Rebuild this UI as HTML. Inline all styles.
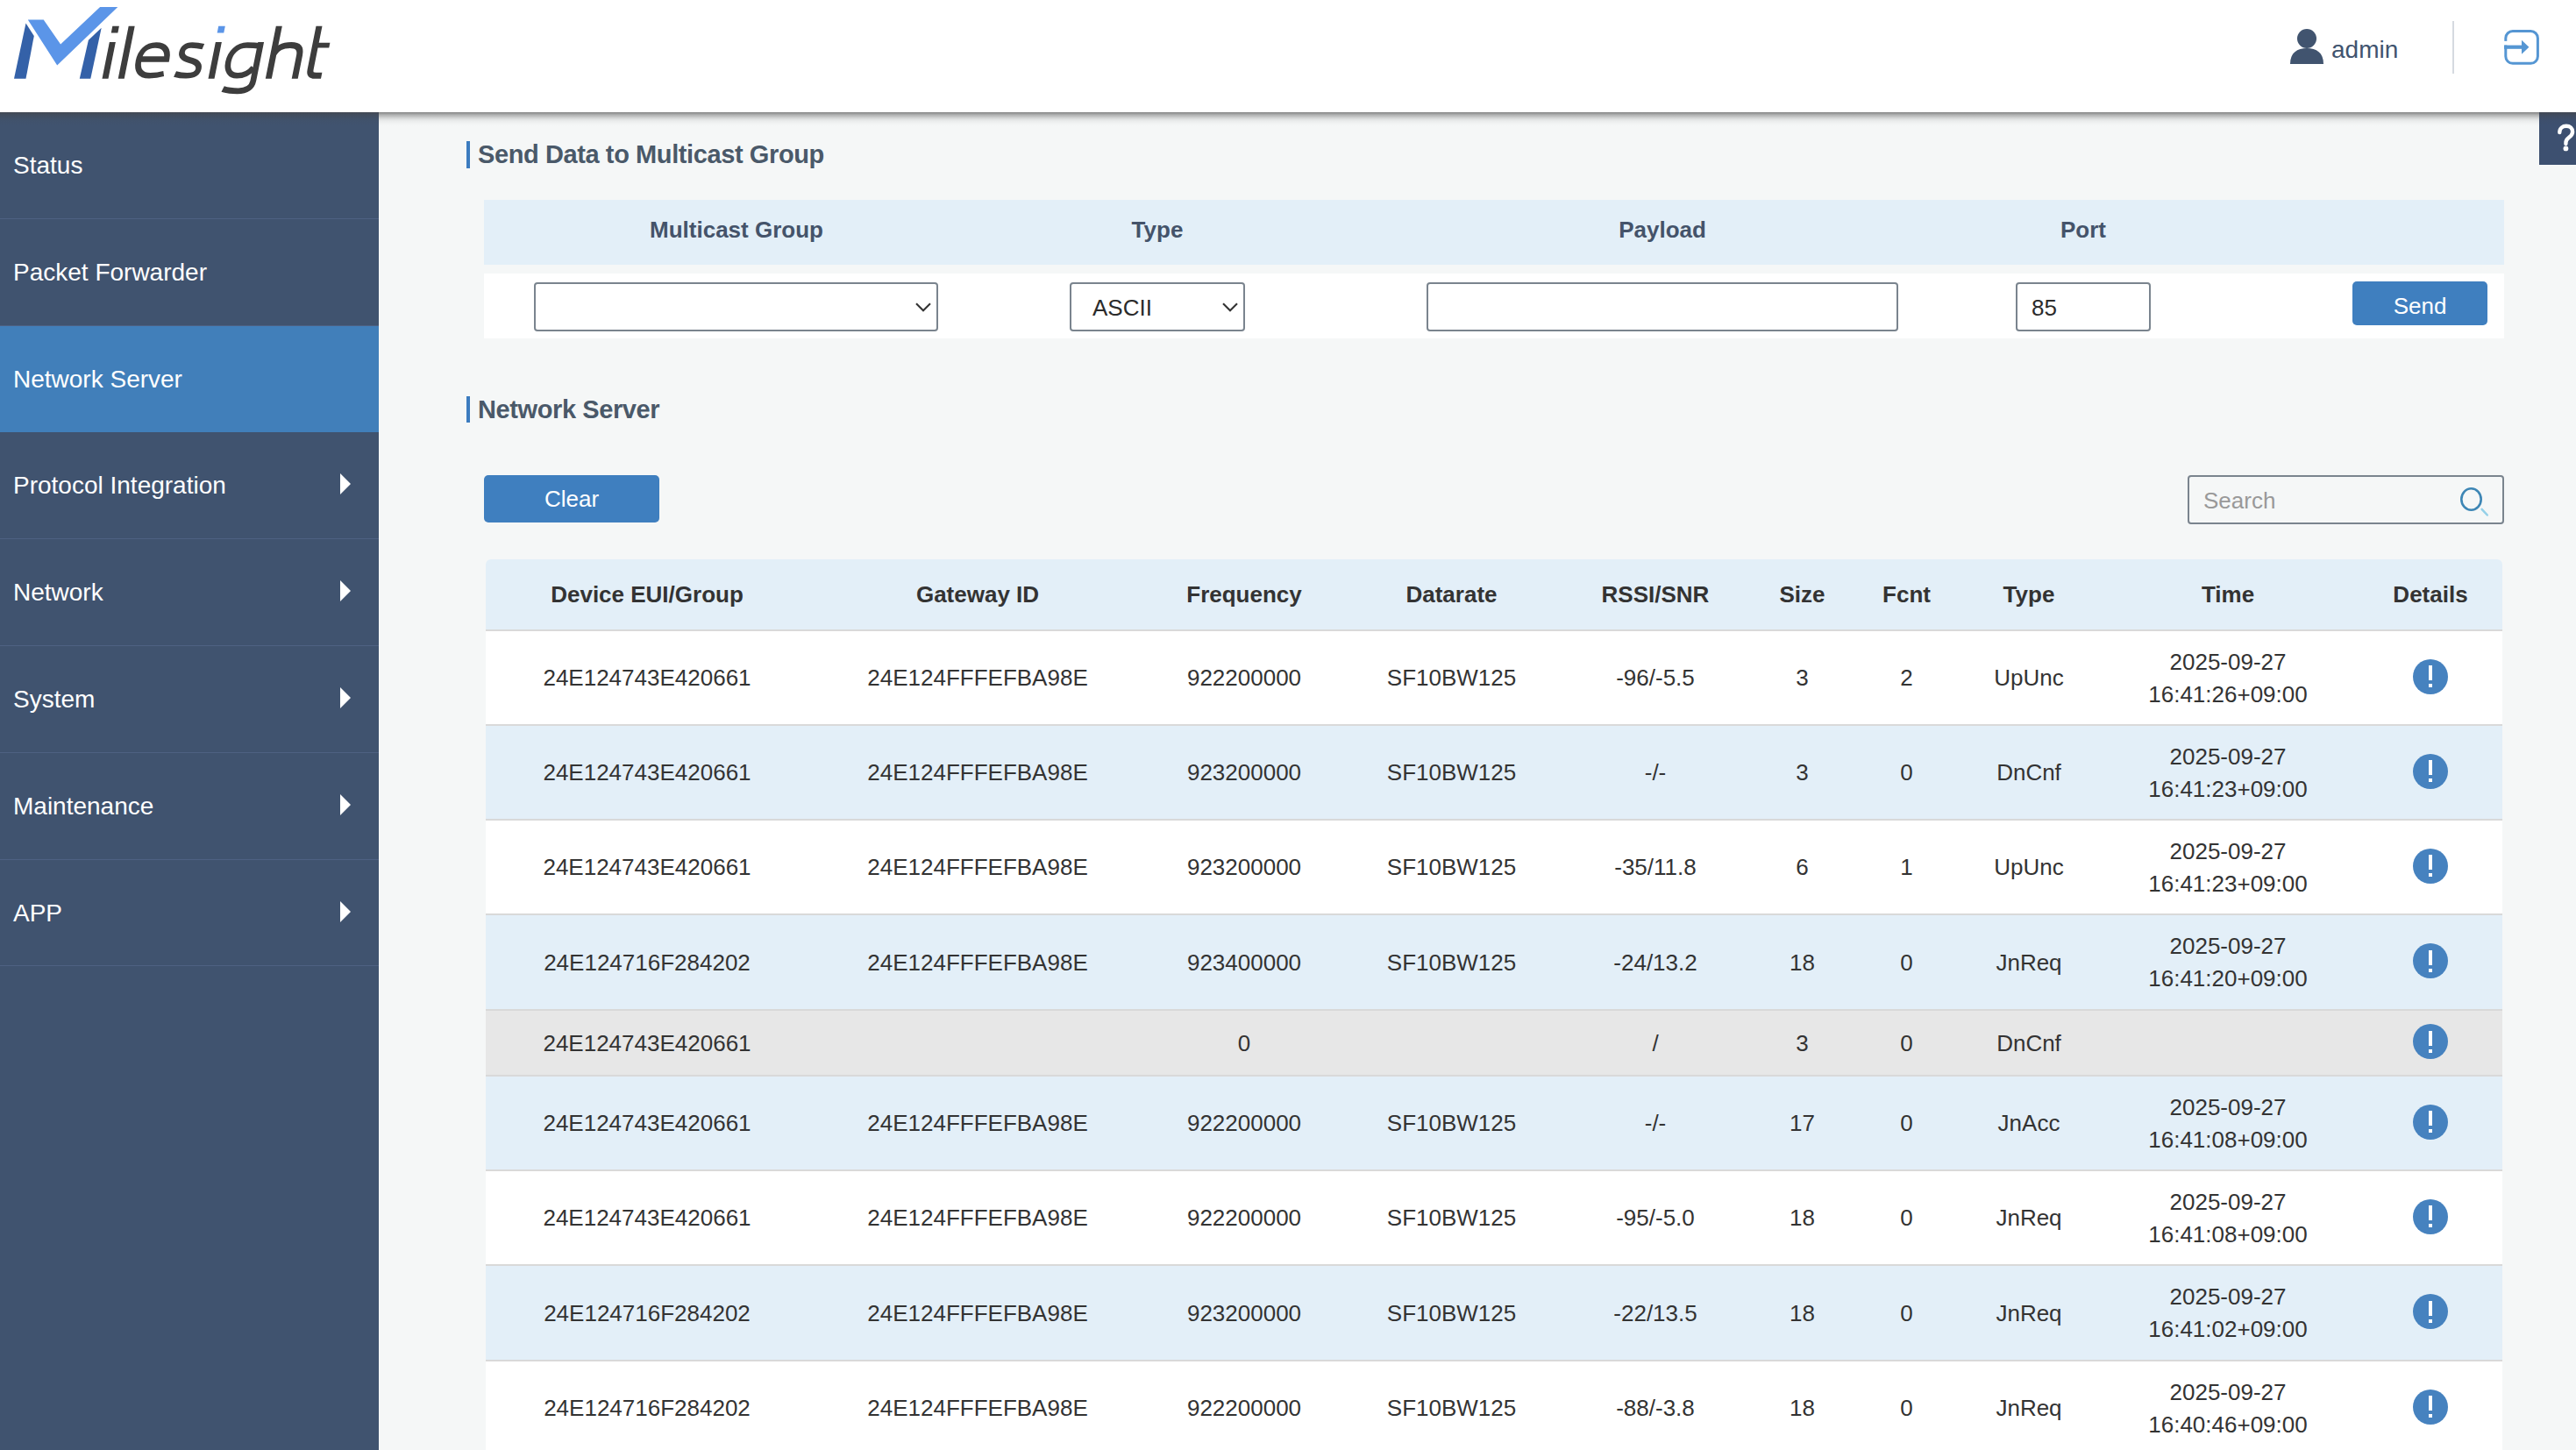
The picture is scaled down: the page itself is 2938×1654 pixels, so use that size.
<!DOCTYPE html>
<html>
<head>
<meta charset="utf-8">
<style>
*{margin:0;padding:0;box-sizing:border-box}
html,body{width:2938px;height:1654px;overflow:hidden}
body{background:#f5f7f7;font-family:"Liberation Sans",sans-serif;color:#333;position:relative}
.abs{position:absolute}
#header{position:absolute;left:0;top:0;width:2938px;height:128px;background:#fff;z-index:5;}
#shadow{position:absolute;left:0;top:128px;width:2938px;height:18px;z-index:7;background:linear-gradient(to bottom,rgba(68,68,68,0.65) 0px,rgba(68,68,68,0.605) 0.5px,rgba(68,68,68,0.514) 1.5px,rgba(68,68,68,0.435) 2.5px,rgba(68,68,68,0.362) 3.5px,rgba(68,68,68,0.311) 4.5px,rgba(68,68,68,0.254) 5.5px,rgba(68,68,68,0.192) 6.5px,rgba(68,68,68,0.153) 7.5px,rgba(68,68,68,0.107) 8.5px,rgba(68,68,68,0.079) 9.5px,rgba(68,68,68,0.056) 10.5px,rgba(68,68,68,0.045) 11.5px,rgba(68,68,68,0.028) 12.5px,rgba(68,68,68,0.017) 13.5px,rgba(68,68,68,0.006) 14.5px,rgba(68,68,68,0) 15.5px)}
#sidebar{position:absolute;left:0;top:128px;width:432px;height:1526px;background:#40536f;z-index:4}
.nav{position:absolute;left:0;width:432px;height:121.8px;border-bottom:1px solid #4e6182;color:#fff;font-size:28px;line-height:40px}
.nav span{position:absolute;left:15px;top:0}
.nav.active{background:#417fba;border-bottom-color:#417fba}
.tri{position:absolute;left:388px;width:0;height:0;border-top:12px solid transparent;border-bottom:12px solid transparent;border-left:12px solid #fff}
#help{position:absolute;left:2896px;top:128px;width:42px;height:60px;background:#3d5070;z-index:6;color:#fff;font-weight:700;font-size:40px;line-height:60px;text-align:center}
.stitle{position:absolute;left:532px;height:31px;border-left:4px solid #3c7cbf;font-weight:700;font-size:29px;letter-spacing:-0.4px;color:#4a5969;line-height:40px;white-space:nowrap}
.stitle span{position:absolute;left:9px;top:0}
.t26{font-size:26px;line-height:40px;white-space:nowrap}
.fh{position:absolute;font-weight:700;font-size:26px;color:#44536a;line-height:40px;text-align:center;white-space:nowrap}
.box{position:absolute;border:2px solid #7a848e;border-radius:4px;background:#fff}
.chev{position:absolute;width:12px;height:12px;border-right:2px solid #333;border-bottom:2px solid #333;transform:rotate(45deg)}
.btn{position:absolute;background:#3f7fbf;border-radius:5px;color:#fff;font-size:26px;text-align:center}
#tbl{position:absolute;left:554px;top:638px;width:2300px}
.row{position:absolute;left:0;width:2300px}
.cell{position:absolute;top:0;height:100%;padding-top:1px;display:flex;align-items:center;justify-content:center;text-align:center;font-size:26px;line-height:37px;color:#333;white-space:nowrap}
.hdr .cell{font-weight:700}
.info{width:40px;height:40px;border-radius:50%;background:#4682bf;position:relative}
.info i{position:absolute;left:17.7px;top:7.6px;width:4.6px;height:17.4px;background:#fff}
.info b{position:absolute;left:17.7px;top:28.7px;width:4.6px;height:3.9px;background:#fff}
</style>
</head>
<body>
<div id="header">
  <!-- logo -->
  <svg class="abs" style="left:0;top:0" width="400" height="128" viewBox="0 0 400 128">
    <polygon fill="#3461a8" points="29.5,26.4 38.8,41.1 29.5,89.8 16,89.8"/>
    <polygon fill="#5b95e8" points="31.8,22.5 49.7,22.5 69.1,50.5 114.1,8.1 134.3,8.1 65.2,74.5"/>
    <polygon fill="#3461a8" points="115.7,31.8 103.3,89.8 90.8,89.8 100.9,45.8"/>
    <g transform="matrix(1,0,-0.2,1,17.96,0)" fill="none" stroke="#3d3d3d" stroke-width="7">
      <line x1="120" y1="48" x2="120" y2="89.8"/>
      <rect x="116.3" y="29.8" width="7.6" height="7.6" fill="#3d3d3d" stroke="none"/>
      <line x1="138.2" y1="29.8" x2="138.2" y2="89.8"/>
      <path d="M154,67.5 H185.6 C185.6,57 180,51.6 170,51.6 C159,51.6 153.9,59 153.9,69 C153.9,80 159,86.3 170,86.3 C176,86.3 181,85.5 185.5,84" stroke-width="6.5"/>
      <path d="M224.5,53.2 C220,52.2 215,51.6 211,51.6 C204,51.6 201.5,55 201.5,59.5 C201.5,65 206,67 212,68.5 C219,70 224.2,72.5 224.2,78.5 C224.2,84 220,86.3 212,86.3 C207,86.3 202.5,85.6 198.5,84.5" stroke-width="6.5"/>
      <line x1="241" y1="48" x2="241" y2="89.8"/>
      <rect x="237.2" y="29.8" width="7.6" height="7.6" fill="#5b95e8" stroke="none"/>
      <path d="M290,52.4 C285,51.9 279,51.6 274,51.6 C263,51.6 256.5,60 256.5,70.5 C256.5,80.5 262,86.3 270,86.3 C277,86.3 283,83 286.5,77" stroke-width="6.5"/>
      <path d="M289.3,48 V92 C289.3,100 284,103.8 274,103.8 C267,103.8 261,103 256.5,101.6" stroke-width="6.8"/>
      <line x1="306.3" y1="29.8" x2="306.3" y2="89.8"/>
      <path d="M306.3,62 C309,54 315,51.6 324,51.6 C332,51.6 336.2,55 336.2,63 V89.8"/>
      <path d="M352,29.8 V79 C352,85 354.5,86.3 359,86.3 H366"/>
      <line x1="352" y1="51.7" x2="368.2" y2="51.7" stroke-width="5.8"/>
    </g>
  </svg>
  <!-- user -->
  <svg class="abs" style="left:2612px;top:33px" width="40" height="40" viewBox="0 0 40 40">
    <circle cx="19" cy="11" r="11" fill="#41546f"/>
    <path d="M0,40 C0,27 8,22 19,22 C30,22 38,27 38,40 Z" fill="#41546f"/>
  </svg>
  <div class="abs" style="left:2659px;top:37px;font-size:28px;line-height:40px;color:#41546f">admin</div>
  <div class="abs" style="left:2797px;top:24px;width:2px;height:60px;background:#d5dae0"></div>
  <svg class="abs" style="left:2855px;top:33px" width="42" height="42" viewBox="0 0 42 42">
    <rect x="2.8" y="2.5" width="36.6" height="36.8" rx="8" fill="none" stroke="#5596d3" stroke-width="3"/>
    <rect x="0" y="13.9" width="6" height="4.6" fill="#fff"/>
    <line x1="1" y1="20.7" x2="23" y2="20.7" stroke="#5596d3" stroke-width="4.2"/>
    <polygon points="21,12.7 29.4,20.7 21,28.8" fill="#5596d3"/>
  </svg>
</div>

<div id="sidebar">
  <div class="nav" style="top:0"><span style="top:41px">Status</span></div>
  <div class="nav" style="top:121.8px"><span style="top:41px">Packet Forwarder</span></div>
  <div class="nav active" style="top:243.6px"><span style="top:41px">Network Server</span></div>
  <div class="nav" style="top:365.4px"><span style="top:41px">Protocol Integration</span><div class="tri" style="top:47px"></div></div>
  <div class="nav" style="top:487.2px"><span style="top:41px">Network</span><div class="tri" style="top:47px"></div></div>
  <div class="nav" style="top:609px"><span style="top:41px">System</span><div class="tri" style="top:47px"></div></div>
  <div class="nav" style="top:730.8px"><span style="top:41px">Maintenance</span><div class="tri" style="top:47px"></div></div>
  <div class="nav" style="top:852.6px"><span style="top:41px">APP</span><div class="tri" style="top:47px"></div></div>
</div>

<div id="help"><svg class="abs" style="left:0;top:0" width="42" height="60" viewBox="0 0 42 60"><path d="M23.3,23 C23.3,18.3 26.8,15.8 30.9,15.8 C35.2,15.8 38.1,18.6 38.1,22.4 C38.1,26.8 33.6,28.4 31.3,31.6 C30.6,32.6 30.4,33.6 30.4,36" fill="none" stroke="#fff" stroke-width="4.4" stroke-linecap="round"/><circle cx="30.4" cy="41.4" r="2.9" fill="#fff"/></svg></div>
<div id="shadow"></div>

<!-- Section 1 -->
<div class="stitle" style="top:161px"><span style="top:-5px">Send Data to Multicast Group</span></div>
<div class="abs" style="left:552px;top:228px;width:2304px;height:74px;background:#e3eff8"></div>
<div class="abs" style="left:552px;top:312px;width:2304px;height:74px;background:#fff"></div>

<div class="fh" style="left:640px;width:400px;top:242px">Multicast Group</div>
<div class="fh" style="left:1120px;width:400px;top:242px">Type</div>
<div class="fh" style="left:1696px;width:400px;top:242px">Payload</div>
<div class="fh" style="left:2176px;width:400px;top:242px">Port</div>
<div class="box" style="left:609px;top:322px;width:461px;height:56px"><svg class="abs" style="left:433px;top:21px" width="18" height="11" viewBox="0 0 18 11"><polyline points="1,1.2 9,9.2 17,1.2" fill="none" stroke="#333" stroke-width="2.1"/></svg></div>
<div class="box" style="left:1220px;top:322px;width:200px;height:56px"><div class="t26 abs" style="left:24px;top:7px;color:#2b2b2b">ASCII</div><svg class="abs" style="left:172px;top:21px" width="18" height="11" viewBox="0 0 18 11"><polyline points="1,1.2 9,9.2 17,1.2" fill="none" stroke="#333" stroke-width="2.1"/></svg></div>
<div class="box" style="left:1627px;top:322px;width:538px;height:56px"></div>
<div class="box" style="left:2299px;top:322px;width:154px;height:56px"><div class="t26 abs" style="left:16px;top:7px;color:#2b2b2b">85</div></div>
<div class="btn" style="left:2683px;top:321px;width:154px;height:50px;line-height:56px;border-radius:5px">Send</div>

<!-- Section 2 -->
<div class="stitle" style="top:452px;height:30px"><span style="top:-5px">Network Server</span></div>
<div class="btn" style="left:552px;top:542px;width:200px;height:54px;line-height:54px">Clear</div>
<div class="box" style="left:2495px;top:542px;width:361px;height:56px;background:transparent"><div class="t26 abs" style="left:16px;top:7px;color:#999">Search</div>
<svg class="abs" style="left:300px;top:10px" width="50" height="40" viewBox="0 0 50 40"><ellipse cx="21.5" cy="15.5" rx="11.2" ry="12.2" fill="none" stroke="#3d86b5" stroke-width="2.6"/><line x1="33.6" y1="26.8" x2="39.8" y2="33.5" stroke="#94d0e8" stroke-width="2.5" stroke-linecap="round"/></svg></div>

<div id="tbl">
<div class="row hdr" style="top:0;height:80px;background:#e3eff8;border-top-left-radius:6px;border-top-right-radius:6px"><div class="cell" style="left:0px;width:368px">Device EUI/Group</div><div class="cell" style="left:368px;width:386px">Gateway ID</div><div class="cell" style="left:754px;width:222px">Frequency</div><div class="cell" style="left:976px;width:251px">Datarate</div><div class="cell" style="left:1227px;width:214px">RSSI/SNR</div><div class="cell" style="left:1441px;width:121px">Size</div><div class="cell" style="left:1562px;width:117px">Fcnt</div><div class="cell" style="left:1679px;width:162px">Type</div><div class="cell" style="left:1841px;width:292px">Time</div><div class="cell" style="left:2133px;width:170px">Details</div></div>
<div class="row" style="top:80px;height:2px;background:#d9d9d9"></div>
<div class="row" style="top:82px;height:106px;background:#fff"><div class="cell" style="left:0px;width:368px">24E124743E420661</div><div class="cell" style="left:368px;width:386px">24E124FFFEFBA98E</div><div class="cell" style="left:754px;width:222px">922200000</div><div class="cell" style="left:976px;width:251px">SF10BW125</div><div class="cell" style="left:1227px;width:214px">-96/-5.5</div><div class="cell" style="left:1441px;width:121px">3</div><div class="cell" style="left:1562px;width:117px">2</div><div class="cell" style="left:1679px;width:162px">UpUnc</div><div class="cell" style="left:1841px;width:292px">2025-09-27<br>16:41:26+09:00</div><div class="cell" style="left:2133px;width:170px"><div class="info" style="top:-2px"><i></i><b></b></div></div></div>
<div class="row" style="top:188px;height:2px;background:#d9d9d9"></div>
<div class="row" style="top:190px;height:106px;background:#e3eff8"><div class="cell" style="left:0px;width:368px">24E124743E420661</div><div class="cell" style="left:368px;width:386px">24E124FFFEFBA98E</div><div class="cell" style="left:754px;width:222px">923200000</div><div class="cell" style="left:976px;width:251px">SF10BW125</div><div class="cell" style="left:1227px;width:214px">-/-</div><div class="cell" style="left:1441px;width:121px">3</div><div class="cell" style="left:1562px;width:117px">0</div><div class="cell" style="left:1679px;width:162px">DnCnf</div><div class="cell" style="left:1841px;width:292px">2025-09-27<br>16:41:23+09:00</div><div class="cell" style="left:2133px;width:170px"><div class="info" style="top:-2px"><i></i><b></b></div></div></div>
<div class="row" style="top:296px;height:2px;background:#d9d9d9"></div>
<div class="row" style="top:298px;height:106px;background:#fff"><div class="cell" style="left:0px;width:368px">24E124743E420661</div><div class="cell" style="left:368px;width:386px">24E124FFFEFBA98E</div><div class="cell" style="left:754px;width:222px">923200000</div><div class="cell" style="left:976px;width:251px">SF10BW125</div><div class="cell" style="left:1227px;width:214px">-35/11.8</div><div class="cell" style="left:1441px;width:121px">6</div><div class="cell" style="left:1562px;width:117px">1</div><div class="cell" style="left:1679px;width:162px">UpUnc</div><div class="cell" style="left:1841px;width:292px">2025-09-27<br>16:41:23+09:00</div><div class="cell" style="left:2133px;width:170px"><div class="info" style="top:-2px"><i></i><b></b></div></div></div>
<div class="row" style="top:404px;height:2px;background:#d9d9d9"></div>
<div class="row" style="top:406px;height:107px;background:#e3eff8"><div class="cell" style="left:0px;width:368px">24E124716F284202</div><div class="cell" style="left:368px;width:386px">24E124FFFEFBA98E</div><div class="cell" style="left:754px;width:222px">923400000</div><div class="cell" style="left:976px;width:251px">SF10BW125</div><div class="cell" style="left:1227px;width:214px">-24/13.2</div><div class="cell" style="left:1441px;width:121px">18</div><div class="cell" style="left:1562px;width:117px">0</div><div class="cell" style="left:1679px;width:162px">JnReq</div><div class="cell" style="left:1841px;width:292px">2025-09-27<br>16:41:20+09:00</div><div class="cell" style="left:2133px;width:170px"><div class="info" style="top:-2px"><i></i><b></b></div></div></div>
<div class="row" style="top:513px;height:2px;background:#d9d9d9"></div>
<div class="row" style="top:515px;height:73px;background:#e7e7e7"><div class="cell" style="left:0px;width:368px">24E124743E420661</div><div class="cell" style="left:368px;width:386px"></div><div class="cell" style="left:754px;width:222px">0</div><div class="cell" style="left:976px;width:251px"></div><div class="cell" style="left:1227px;width:214px">/</div><div class="cell" style="left:1441px;width:121px">3</div><div class="cell" style="left:1562px;width:117px">0</div><div class="cell" style="left:1679px;width:162px">DnCnf</div><div class="cell" style="left:1841px;width:292px"></div><div class="cell" style="left:2133px;width:170px"><div class="info" style="top:-2px"><i></i><b></b></div></div></div>
<div class="row" style="top:588px;height:2px;background:#d9d9d9"></div>
<div class="row" style="top:590px;height:106px;background:#e3eff8"><div class="cell" style="left:0px;width:368px">24E124743E420661</div><div class="cell" style="left:368px;width:386px">24E124FFFEFBA98E</div><div class="cell" style="left:754px;width:222px">922200000</div><div class="cell" style="left:976px;width:251px">SF10BW125</div><div class="cell" style="left:1227px;width:214px">-/-</div><div class="cell" style="left:1441px;width:121px">17</div><div class="cell" style="left:1562px;width:117px">0</div><div class="cell" style="left:1679px;width:162px">JnAcc</div><div class="cell" style="left:1841px;width:292px">2025-09-27<br>16:41:08+09:00</div><div class="cell" style="left:2133px;width:170px"><div class="info" style="top:-2px"><i></i><b></b></div></div></div>
<div class="row" style="top:696px;height:2px;background:#d9d9d9"></div>
<div class="row" style="top:698px;height:106px;background:#fff"><div class="cell" style="left:0px;width:368px">24E124743E420661</div><div class="cell" style="left:368px;width:386px">24E124FFFEFBA98E</div><div class="cell" style="left:754px;width:222px">922200000</div><div class="cell" style="left:976px;width:251px">SF10BW125</div><div class="cell" style="left:1227px;width:214px">-95/-5.0</div><div class="cell" style="left:1441px;width:121px">18</div><div class="cell" style="left:1562px;width:117px">0</div><div class="cell" style="left:1679px;width:162px">JnReq</div><div class="cell" style="left:1841px;width:292px">2025-09-27<br>16:41:08+09:00</div><div class="cell" style="left:2133px;width:170px"><div class="info" style="top:-2px"><i></i><b></b></div></div></div>
<div class="row" style="top:804px;height:2px;background:#d9d9d9"></div>
<div class="row" style="top:806px;height:107px;background:#e3eff8"><div class="cell" style="left:0px;width:368px">24E124716F284202</div><div class="cell" style="left:368px;width:386px">24E124FFFEFBA98E</div><div class="cell" style="left:754px;width:222px">923200000</div><div class="cell" style="left:976px;width:251px">SF10BW125</div><div class="cell" style="left:1227px;width:214px">-22/13.5</div><div class="cell" style="left:1441px;width:121px">18</div><div class="cell" style="left:1562px;width:117px">0</div><div class="cell" style="left:1679px;width:162px">JnReq</div><div class="cell" style="left:1841px;width:292px">2025-09-27<br>16:41:02+09:00</div><div class="cell" style="left:2133px;width:170px"><div class="info" style="top:-2px"><i></i><b></b></div></div></div>
<div class="row" style="top:913px;height:2px;background:#d9d9d9"></div>
<div class="row" style="top:915px;height:106px;background:#fff"><div class="cell" style="left:0px;width:368px">24E124716F284202</div><div class="cell" style="left:368px;width:386px">24E124FFFEFBA98E</div><div class="cell" style="left:754px;width:222px">922200000</div><div class="cell" style="left:976px;width:251px">SF10BW125</div><div class="cell" style="left:1227px;width:214px">-88/-3.8</div><div class="cell" style="left:1441px;width:121px">18</div><div class="cell" style="left:1562px;width:117px">0</div><div class="cell" style="left:1679px;width:162px">JnReq</div><div class="cell" style="left:1841px;width:292px">2025-09-27<br>16:40:46+09:00</div><div class="cell" style="left:2133px;width:170px"><div class="info" style="top:-2px"><i></i><b></b></div></div></div>
<div class="row" style="top:1021px;height:2px;background:#d9d9d9"></div>
</div>
</body>
</html>
